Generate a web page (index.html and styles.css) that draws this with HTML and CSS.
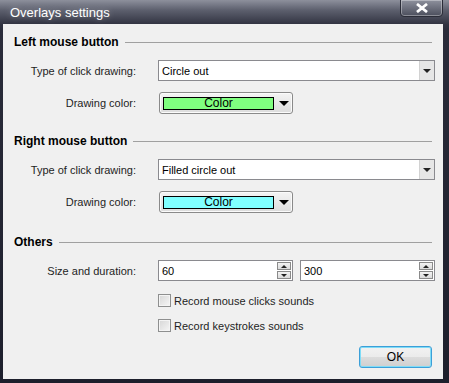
FILE: index.html
```html
<!DOCTYPE html>
<html lang="en">

<head>
    <meta charset="UTF-8">
    <title>Overlays settings</title>
    <link rel="stylesheet" href="styles.css">
</head>

<body>
    <div class="window">
        <div class="titlebar">
            <span class="title">Overlays settings</span>
            <button class="close">
                <svg width="14" height="10" viewBox="0 0 14 10">
                    <path d="M2 1 L12 9 M12 1 L2 9" stroke="#fff" stroke-width="2.8" />
                </svg>
            </button>
        </div>

        <div class="content">
            <div class="section-head">
                <span>Left mouse button</span>
                <div class="rule"></div>
            </div>
            <div class="row first">
                <label>Type of click drawing:</label>
                <div class="combo">
                    <span class="combo-text">Circle out</span>
                    <span class="combo-btn"><i class="tri"></i></span>
                </div>
            </div>
            <div class="row second">
                <label>Drawing color:</label>
                <div class="color-btn">
                    <span class="swatch green">Color</span>
                    <i class="big-tri"></i>
                </div>
            </div>

            <div class="section-head right-head">
                <span>Right mouse button</span>
                <div class="rule"></div>
            </div>
            <div class="row first">
                <label>Type of click drawing:</label>
                <div class="combo">
                    <span class="combo-text">Filled circle out</span>
                    <span class="combo-btn"><i class="tri"></i></span>
                </div>
            </div>
            <div class="row second">
                <label>Drawing color:</label>
                <div class="color-btn">
                    <span class="swatch cyan">Color</span>
                    <i class="big-tri"></i>
                </div>
            </div>

            <div class="section-head others-head">
                <span>Others</span>
                <div class="rule"></div>
            </div>
            <div class="row first spin-row">
                <label>Size and duration:</label>
                <div class="spins">
                    <div class="spin">
                        <span class="spin-text">60</span>
                        <span class="spin-btns">
                            <span class="spin-btn"><i class="up"></i></span>
                            <span class="spin-btn"><i class="tri"></i></span>
                        </span>
                    </div>
                    <div class="spin">
                        <span class="spin-text">300</span>
                        <span class="spin-btns">
                            <span class="spin-btn"><i class="up"></i></span>
                            <span class="spin-btn"><i class="tri"></i></span>
                        </span>
                    </div>
                </div>
            </div>
            <div class="check first-check">
                <span class="box"></span>
                <span>Record mouse clicks sounds</span>
            </div>
            <div class="check">
                <span class="box"></span>
                <span>Record keystrokes sounds</span>
            </div>

            <div class="footer">
                <button class="ok">OK</button>
            </div>
        </div>
    </div>
</body>

</html>
```

FILE: styles.css
```css
body {
    margin: 0;
    font-family: "Liberation Sans", Arial, sans-serif;
    font-size: 11px;
    color: #000;
}

.window {
    width: 449px;
    height: 383px;
    box-sizing: border-box;
    padding: 0 6px 4px 3px;
    background: linear-gradient(to bottom, #4c4f5e 0, #2a2c3a 30px, #1d1f2c 100%);
    display: flex;
    flex-direction: column;
}

.titlebar {
    height: 24px;
    flex: none;
    display: flex;
    align-items: flex-start;
    background: linear-gradient(to bottom, #8d909c 0, #5d606e 10px, #323442 24px);
    margin: 0 -6px 0 -3px;
    padding: 0 6px 0 10px;
}

.title {
    color: #fff;
    font-size: 13px;
    line-height: 24px;
    padding-top: 1px;
    text-shadow: 0 0 6px rgba(255, 255, 255, 0.35);
}

.close {
    margin-left: auto;
    margin-top: -1px;
    width: 43px;
    height: 18px;
    border: 1px solid #2b2d38;
    border-radius: 0 0 4px 4px;
    background: linear-gradient(to bottom, #8e919d, #4b4e5c);
    box-shadow: inset 0 0 0 1px rgba(255, 255, 255, 0.35);
    display: flex;
    align-items: center;
    justify-content: center;
    padding: 0;
}

.content {
    flex: 1;
    background: #f0f0f0;
    padding: 0 11px 0 11px;
    display: flex;
    flex-direction: column;
}

.section-head {
    height: 16px;
    margin-top: 10px;
    display: flex;
    align-items: center;
    gap: 6px;
    font-weight: bold;
    font-size: 12px;
}

.right-head {
    margin-top: 19px;
}

.others-head {
    margin-top: 21px;
}

.rule {
    flex: 1;
    border-top: 1px solid #a0a0a0;
    margin-top: 1px;
}

.row {
    display: grid;
    grid-template-columns: 122px auto;
    column-gap: 22px;
    align-items: center;
}

.row label {
    text-align: right;
    color: #1e1e1e;
}

.row.first {
    margin-top: 10px;
    height: 21px;
}

.row.second {
    margin-top: 11px;
    height: 22px;
}

.combo {
    width: 277px;
    height: 21px;
    box-sizing: border-box;
    border: 1px solid #8a8a8f;
    background: #fff;
    display: flex;
    align-items: center;
}

.combo-text {
    flex: 1;
    padding-left: 3px;
}

.combo-btn {
    width: 15px;
    height: 19px;
    box-sizing: border-box;
    border-left: 1px solid #d2d2d2;
    background: #e6e6e6;
    display: flex;
    align-items: center;
    justify-content: center;
}

.tri {
    width: 0;
    height: 0;
    border-left: 4px solid transparent;
    border-right: 4px solid transparent;
    border-top: 4px solid #222;
}

.up {
    width: 0;
    height: 0;
    border-left: 4px solid transparent;
    border-right: 4px solid transparent;
    border-bottom: 4px solid #222;
}

.color-btn {
    width: 134px;
    height: 22px;
    margin-left: 1px;
    box-sizing: border-box;
    border: 1px solid #8a8a8a;
    border-radius: 3px;
    background: linear-gradient(to bottom, #f4f4f4, #dcdcdc);
    box-shadow: inset 0 0 0 1px #fbfbfb;
    display: flex;
    align-items: center;
    padding-left: 3px;
}

.swatch {
    width: 111px;
    height: 13px;
    box-sizing: border-box;
    border: 1px solid #000;
    text-align: center;
    line-height: 11px;
    font-size: 12px;
}

.swatch.green {
    background: #80ff80;
}

.swatch.cyan {
    background: #80ffff;
}

.big-tri {
    margin-left: 5px;
    width: 0;
    height: 0;
    border-left: 5px solid transparent;
    border-right: 5px solid transparent;
    border-top: 5px solid #000;
}

.spins {
    display: flex;
    gap: 7px;
}

.spin {
    width: 135px;
    height: 21px;
    box-sizing: border-box;
    border: 1px solid #8a8a8f;
    background: #fff;
    display: flex;
    align-items: center;
}

.spin-text {
    flex: 1;
    padding-left: 3px;
}

.spin-btns {
    display: flex;
    flex-direction: column;
    gap: 1px;
    margin-right: 1px;
}

.spin-btn {
    width: 14px;
    height: 8px;
    box-sizing: border-box;
    border: 1px solid #8a8a8a;
    background: linear-gradient(to bottom, #f3f3f3, #dadada);
    display: flex;
    align-items: center;
    justify-content: center;
}

.spin-btn .up,
.spin-btn .tri {
    border-left-width: 3px;
    border-right-width: 3px;
    border-top-width: 3px;
    border-bottom-width: 3px;
}

.spin-btn .up {
    border-top: 0;
}

.spin-btn .tri {
    border-bottom: 0;
}

.check {
    margin-left: 144px;
    margin-top: 12px;
    height: 13px;
    display: flex;
    align-items: center;
    gap: 3px;
    color: #1e1e1e;
}

.check.first-check {
    margin-top: 13px;
}

.box {
    width: 13px;
    height: 13px;
    box-sizing: border-box;
    border: 1px solid #8e8f8f;
    background: linear-gradient(135deg, #d6d6d6, #f6f6f6);
    box-shadow: inset 0 0 0 1px #f4f4f4;
}

.footer {
    margin-top: 14px;
    display: flex;
    justify-content: flex-end;
}

.ok {
    width: 73px;
    height: 22px;
    box-sizing: border-box;
    border: 1px solid #3c9fd8;
    border-radius: 3px;
    background: linear-gradient(to bottom, #f2f2f2 0, #ebebeb 50%, #dcdcdc 51%, #cfcfcf 100%);
    box-shadow: inset 0 0 0 1px #7fdcf7;
    font-family: inherit;
    font-size: 12px;
    color: #000;
    padding: 0;
}
```
